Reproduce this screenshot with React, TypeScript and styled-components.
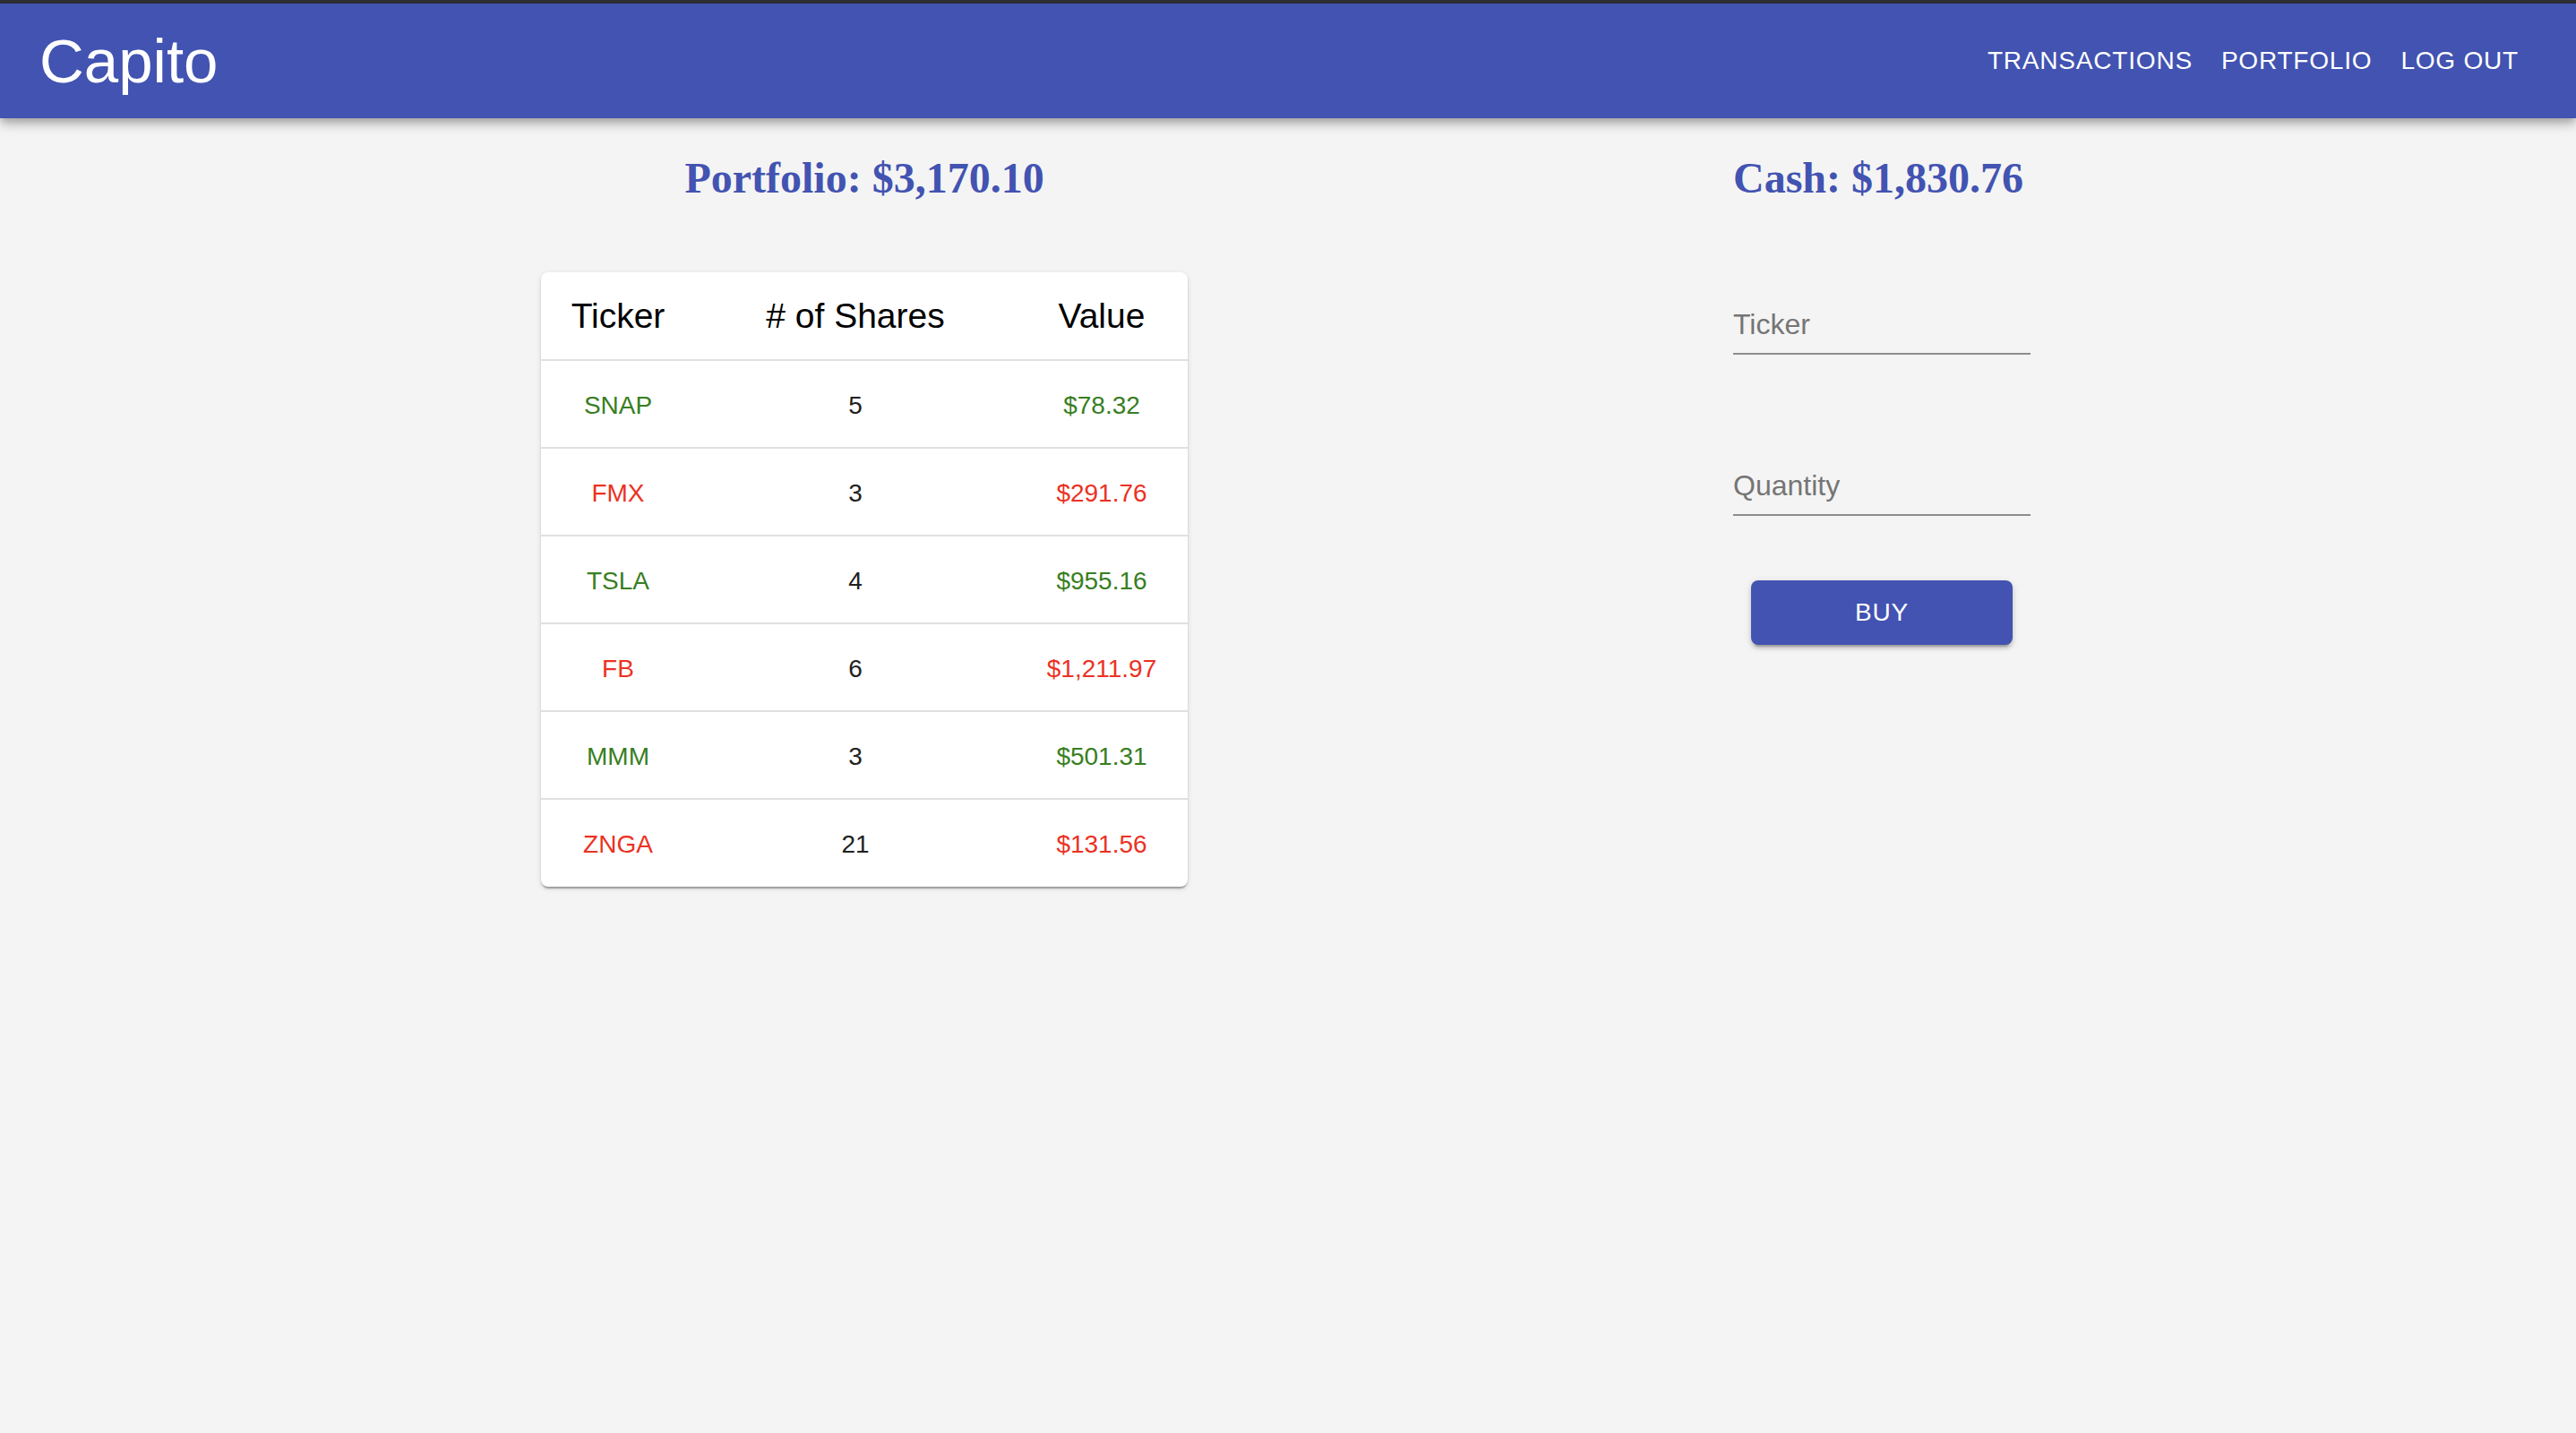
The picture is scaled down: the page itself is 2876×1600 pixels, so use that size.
import React from "react";
import styled, { createGlobalStyle } from "styled-components";

const GlobalStyle = createGlobalStyle`
  html, body {
    margin: 0;
    padding: 0;
    background: #f4f4f4;
  }
  body {
    font-family: "Liberation Sans", Arial, sans-serif;
  }
  * { box-sizing: border-box; }
`;

const Page = styled.div`
  min-height: 1600px;
  background: #f4f4f4;
  display: flex;
  flex-direction: column;
`;

const AppBar = styled.header`
  position: relative;
  z-index: 2;
  height: 132px;
  border-top: 4px solid #2c2e34;
  background: #4253b1;
  color: #fff;
  display: flex;
  align-items: center;
  justify-content: space-between;
  padding: 0 48px 0 44px;
  box-shadow: 0 4px 8px -2px rgba(0, 0, 0, 0.2), 0 8px 10px 0 rgba(0, 0, 0, 0.14),
    0 2px 20px 0 rgba(0, 0, 0, 0.12);
`;

const Logo = styled.div`
  font-family: "Liberation Sans", Arial, sans-serif;
  font-size: 69px;
  font-weight: 400;
  line-height: 1;
`;

const Nav = styled.nav`
  display: flex;
  align-items: center;
`;

const NavButton = styled.button`
  background: transparent;
  border: none;
  color: #fff;
  font-family: "Liberation Sans", Arial, sans-serif;
  font-size: 28px;
  font-weight: 500;
  letter-spacing: 0.02857em;
  text-transform: uppercase;
  line-height: 36px;
  padding: 12px 16px;
  cursor: pointer;
`;

const Main = styled.main`
  display: flex;
  justify-content: space-evenly;
  align-items: flex-start;
`;

const Column = styled.section<{ $width: number; $align: "center" | "flex-start"; $inset?: number }>`
  width: ${(p) => p.$width}px;
  padding-left: ${(p) => p.$inset ?? 0}px;
  display: flex;
  flex-direction: column;
  align-items: ${(p) => p.$align};
`;

const Heading = styled.h2`
  margin: 39px 0 0;
  font-family: "Liberation Serif", "Times New Roman", serif;
  font-size: 48px;
  font-weight: 700;
  line-height: 55px;
  color: #4253b1;
  white-space: nowrap;
`;

const TablePaper = styled.div`
  margin-top: 78px;
  width: 722px;
  background: #fff;
  border-radius: 8px;
  overflow: hidden;
  box-shadow: 0 4px 2px -2px rgba(0, 0, 0, 0.2), 0 2px 2px 0 rgba(0, 0, 0, 0.14),
    0 2px 6px 0 rgba(0, 0, 0, 0.12);
`;

const Table = styled.table`
  width: 100%;
  border-collapse: collapse;
  table-layout: fixed;
`;

const HeadCell = styled.th<{ $w: number }>`
  width: ${(p) => p.$w}px;
  height: 98px;
  padding: 0;
  border-bottom: 2px solid #e0e0e0;
  text-align: center;
  vertical-align: middle;
  font-family: "Liberation Sans", Arial, sans-serif;
  font-size: 39px;
  font-weight: 400;
  color: #000;
`;

const Row = styled.tr`
  height: 98px;
  border-bottom: 2px solid #e0e0e0;
  &:last-child {
    border-bottom: none;
  }
`;

const Cell = styled.td<{ $tone?: "up" | "down" }>`
  padding: 3px 0 0;
  text-align: center;
  vertical-align: middle;
  font-family: "Liberation Sans", Arial, sans-serif;
  font-size: 28px;
  font-weight: 400;
  color: ${(p) =>
    p.$tone === "up" ? "#387e22" : p.$tone === "down" ? "#eb3223" : "#212121"};
`;

const Form = styled.form`
  width: 332px;
  padding-top: 117px;
  display: flex;
  flex-direction: column;
  align-items: center;
`;

const Field = styled.label<{ $gap: number }>`
  width: 332px;
  margin-top: ${(p) => p.$gap}px;
  line-height: 38px;
  padding-bottom: 13px;
  border-bottom: 2px solid #8c8c8c;
  font-family: "Liberation Sans", Arial, sans-serif;
  font-size: 32px;
  color: #757575;
`;

const BuyButton = styled.button`
  margin-top: 72px;
  width: 292px;
  height: 72px;
  border: none;
  border-radius: 8px;
  background: #4253b1;
  color: #fff;
  font-family: "Liberation Sans", Arial, sans-serif;
  font-size: 28px;
  font-weight: 500;
  letter-spacing: 0.02857em;
  text-transform: uppercase;
  cursor: pointer;
  box-shadow: 0 6px 2px -4px rgba(0, 0, 0, 0.2), 0 4px 4px 0 rgba(0, 0, 0, 0.14),
    0 2px 10px 0 rgba(0, 0, 0, 0.12);
`;

type Holding = { ticker: string; shares: number; value: string; up: boolean };

const holdings: Holding[] = [
  { ticker: "SNAP", shares: 5, value: "$78.32", up: true },
  { ticker: "FMX", shares: 3, value: "$291.76", up: false },
  { ticker: "TSLA", shares: 4, value: "$955.16", up: true },
  { ticker: "FB", shares: 6, value: "$1,211.97", up: false },
  { ticker: "MMM", shares: 3, value: "$501.31", up: true },
  { ticker: "ZNGA", shares: 21, value: "$131.56", up: false },
];

export default function App() {
  return (
    <>
      <GlobalStyle />
      <Page>
        <AppBar>
          <Logo>Capito</Logo>
          <Nav>
            <NavButton>Transactions</NavButton>
            <NavButton>Portfolio</NavButton>
            <NavButton>Log Out</NavButton>
          </Nav>
        </AppBar>
        <Main>
          <Column $width={722} $align="center">
            <Heading>Portfolio: $3,170.10</Heading>
            <TablePaper>
              <Table>
                <thead>
                  <tr>
                    <HeadCell $w={172}>Ticker</HeadCell>
                    <HeadCell $w={358}># of Shares</HeadCell>
                    <HeadCell $w={192}>Value</HeadCell>
                  </tr>
                </thead>
                <tbody>
                  {holdings.map((h) => (
                    <Row key={h.ticker}>
                      <Cell $tone={h.up ? "up" : "down"}>{h.ticker}</Cell>
                      <Cell>{h.shares}</Cell>
                      <Cell $tone={h.up ? "up" : "down"}>{h.value}</Cell>
                    </Row>
                  ))}
                </tbody>
              </Table>
            </TablePaper>
          </Column>
          <Column $width={342} $align="flex-start" $inset={5}>
            <Heading>Cash: $1,830.76</Heading>
            <Form onSubmit={(e) => e.preventDefault()}>
              <Field $gap={0}>Ticker</Field>
              <Field $gap={127}>Quantity</Field>
              <BuyButton type="submit">Buy</BuyButton>
            </Form>
          </Column>
        </Main>
      </Page>
    </>
  );
}
